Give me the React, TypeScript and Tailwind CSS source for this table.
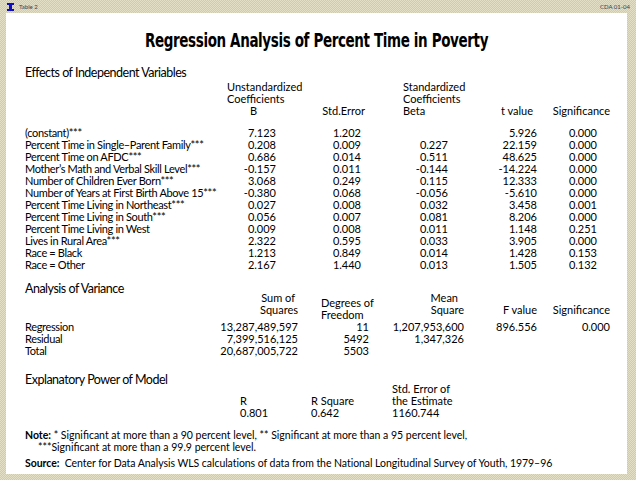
import React from 'react';

const effects = [
  ['(constant)***', '7.123', '1.202', '', '5.926', '0.000'],
  ['Percent Time in Single–Parent Family***', '0.208', '0.009', '0.227', '22.159', '0.000'],
  ['Percent Time on AFDC***', '0.686', '0.014', '0.511', '48.625', '0.000'],
  ['Mother’s Math and Verbal Skill Level***', '-0.157', '0.011', '-0.144', '-14.224', '0.000'],
  ['Number of Children Ever Born***', '3.068', '0.249', '0.115', '12.333', '0.000'],
  ['Number of Years at First Birth Above 15***', '-0.380', '0.068', '-0.056', '-5.610', '0.000'],
  ['Percent Time Living in Northeast***', '0.027', '0.008', '0.032', '3.458', '0.001'],
  ['Percent Time Living in South***', '0.056', '0.007', '0.081', '8.206', '0.000'],
  ['Percent Time Living in West', '0.009', '0.008', '0.011', '1.148', '0.251'],
  ['Lives in Rural Area***', '2.322', '0.595', '0.033', '3.905', '0.000'],
  ['Race = Black', '1.213', '0.849', '0.014', '1.428', '0.153'],
  ['Race = Other', '2.167', '1.440', '0.013', '1.505', '0.132'],
];

const anova = [
  ['Regression', '13,287,489,597', '11', '1,207,953,600', '896.556', '0.000'],
  ['Residual', '7,399,516,125', '5492', '1,347,326', '', ''],
  ['Total', '20,687,005,722', '5503', '', '', ''],
];

const font = { fontFamily: 'Lato, "DejaVu Sans", sans-serif' };

export default function App() {
  return (
    <div
      className="w-[636px] h-[480px] flex flex-col bg-[repeating-conic-gradient(#cac6d6_0_25%,#e2dfc6_0_50%)] bg-[length:2px_2px] text-black"
      style={font}
    >
      {/* title bar */}
      <div className="h-[13px] flex items-center justify-between pl-[7px] pr-[6px]">
        <div className="flex items-center gap-[5px]">
          <svg width="7" height="8" viewBox="0 0 7 8">
            <rect x="0" y="0" width="7" height="2" fill="#1010c0" />
            <rect x="2" y="2" width="3" height="4" fill="#1010c0" />
            <rect x="0" y="6" width="7" height="2" fill="#1010c0" />
          </svg>
          <span className="text-[6px] leading-[6px] text-gray-700">Table 2</span>
        </div>
        <span className="text-[6px] leading-[6px] text-gray-700">CDA 01-04</span>
      </div>

      <div className="flex-1 ml-[6px] mr-[9px] mb-[6px] bg-white pl-[19px]">
        <h1
          className="mt-[15px] h-[24px] leading-[24px] text-center text-[20px] font-bold -ml-[19px] tracking-[-0.5px] scale-x-[0.75]"
          style={{ fontFamily: '"DejaVu Sans Condensed", "Liberation Sans", sans-serif' }}
        >
          Regression Analysis of Percent Time in Poverty
        </h1>

        {/* Effects */}
        <div className="mt-[15px] text-[12.5px] leading-[12px] tracking-[-0.5px]">Effects of Independent Variables</div>
        <div className="mt-[2px] grid grid-cols-[202px_49px_89px_83px_89px_73px] text-[11px] leading-[12px]">
          <div />
          <div className="whitespace-nowrap">
            <div>Unstandardized</div>
            <div>Coefficients</div>
            <div className="pl-[23px]">B</div>
          </div>
          <div className="flex flex-col justify-end text-right">Std.Error</div>
          <div className="whitespace-nowrap pl-[38px]">
            <div>Standardized</div>
            <div>Coefficients</div>
            <div>Beta</div>
          </div>
          <div className="flex flex-col justify-end text-right pr-[4px]">t value</div>
          <div className="flex flex-col justify-end text-right">Significance</div>
        </div>
        <div className="mt-[10px] text-[11px] leading-[12px]">
          {effects.map((r) => (
            <div key={r[0]} className="grid grid-cols-[202px_49px_85px_87px_89px_60px] h-[12px]">
              <div className="whitespace-nowrap tracking-[-0.35px]">{r[0]}</div>
              <div className="text-right">{r[1]}</div>
              <div className="text-right">{r[2]}</div>
              <div className="text-right">{r[3]}</div>
              <div className="text-right">{r[4]}</div>
              <div className="text-right">{r[5]}</div>
            </div>
          ))}
        </div>

        {/* ANOVA */}
        <div className="mt-[12px] text-[12.5px] leading-[12px] tracking-[-0.5px]">Analysis of Variance</div>
        <div className="-mt-[3px] h-[29px] grid grid-cols-[175px_98px_71px_95px_73px_73px] text-[11px] leading-[12px]">
          <div />
          <div className="text-right">
            <div className="pr-[3px]">Sum of</div>
            <div>Squares</div>
          </div>
          <div className="pt-[5px] pl-[23px] whitespace-nowrap">
            <div>Degrees of</div>
            <div>Freedom</div>
          </div>
          <div className="text-right">
            <div className="pr-[6px]">Mean</div>
            <div>Square</div>
          </div>
          <div className="pt-[12px] text-right">F value</div>
          <div className="pt-[12px] text-right">Significance</div>
        </div>
        <div className="text-[11px] leading-[12px]">
          {anova.map((r) => (
            <div key={r[0]} className="grid grid-cols-[175px_98px_71px_95px_73px_73px] h-[12px]">
              <div className="tracking-[-0.35px]">{r[0]}</div>
              <div className="text-right">{r[1]}</div>
              <div className="text-right">{r[2]}</div>
              <div className="text-right">{r[3]}</div>
              <div className="text-right">{r[4]}</div>
              <div className="text-right">{r[5]}</div>
            </div>
          ))}
        </div>

        {/* Explanatory power */}
        <div className="mt-[17px] text-[12.5px] leading-[12px] tracking-[-0.5px]">Explanatory Power of Model</div>
        <div className="-mt-[3px] grid grid-cols-[215px_71px_81px_120px] text-[11px] leading-[12px]">
          <div />
          <div>
            <div>&nbsp;</div>
            <div>R</div>
            <div>0.801</div>
          </div>
          <div>
            <div>&nbsp;</div>
            <div>R Square</div>
            <div>0.642</div>
          </div>
          <div className="whitespace-nowrap">
            <div>Std. Error of</div>
            <div>the Estimate</div>
            <div>1160.744</div>
          </div>
        </div>

        {/* Notes */}
        <div className="mt-[10px] text-[10.5px] leading-[12px]">
          <div>
            <span className="font-bold">Note:</span> * Significant at more than a 90 percent level, ** Significant at more than a 95 percent level,
          </div>
          <div className="pl-[13px]">***Significant at more than a 99.9 percent level.</div>
        </div>
        <div className="mt-[4px] text-[10.5px] leading-[12px] whitespace-nowrap tracking-[-0.05px]">
          <span className="font-bold">Source:</span>&nbsp; Center for Data Analysis WLS calculations of data from the National Longitudinal Survey of Youth, 1979–96
        </div>
      </div>
    </div>
  );
}
